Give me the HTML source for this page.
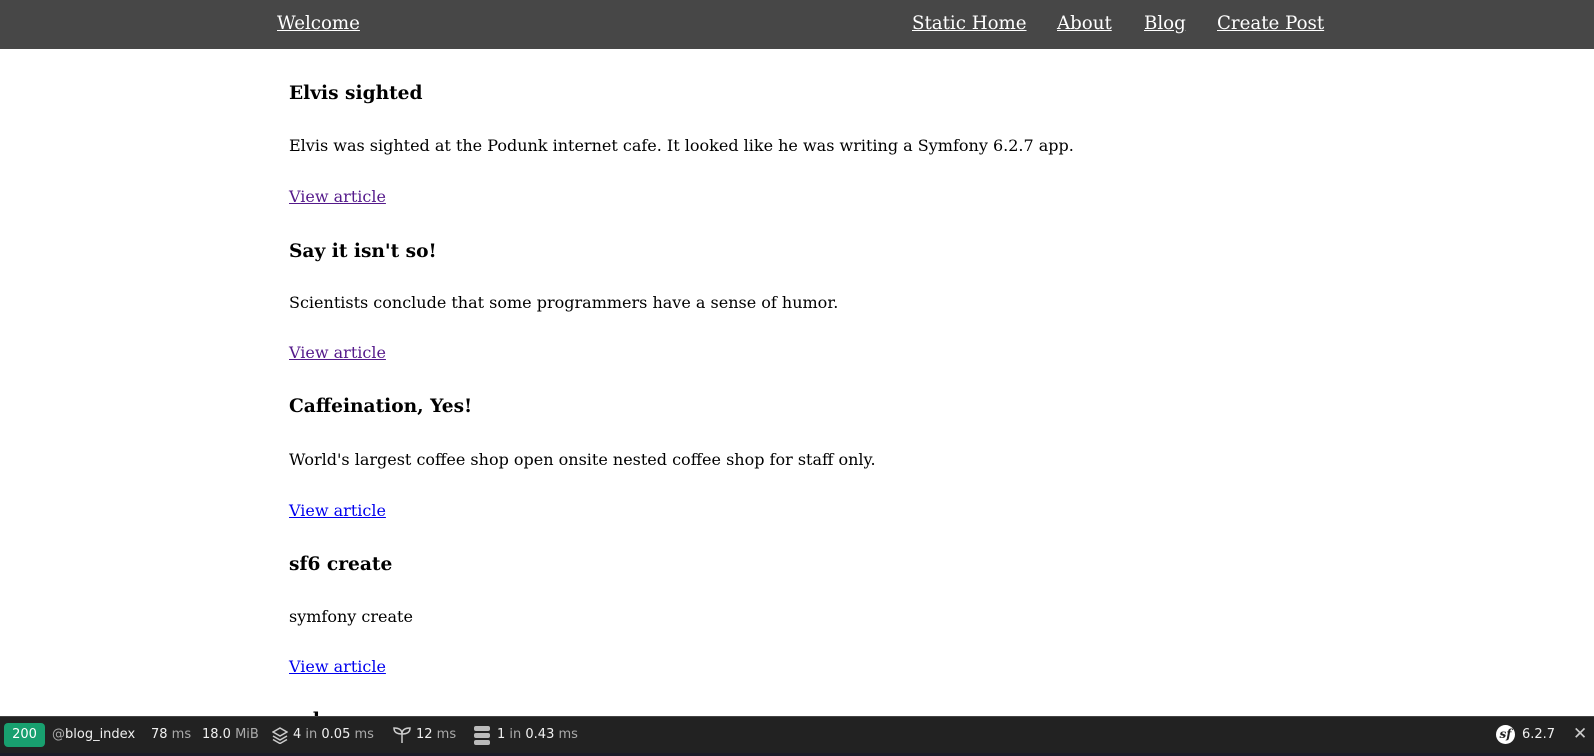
<!DOCTYPE html>
<html><head><meta charset="utf-8"><style>
body{margin:0;width:1594px;height:756px;overflow:hidden;background:#fff;font-family:"DejaVu Serif",serif;position:relative}
.nav{position:absolute;left:0;top:0;width:1594px;height:49px;background:#474747}
.nav a{position:absolute;top:12px;color:#fff;font-size:18.2px;text-decoration:underline;line-height:24px}
.t{position:absolute;left:289px;white-space:nowrap;line-height:22px}
h3.t{margin:0;font-size:18.6px;font-weight:bold}
p.t{margin:0;font-size:16px}
a.t{font-size:16px;color:#0000ee;text-decoration:underline}
a.v{color:#551a8b}
.tb{position:absolute;left:0;top:716px;width:1594px;height:37px;background:#222;border-top:1px solid #444;font-family:"DejaVu Sans",sans-serif;font-size:13px;color:#f0f0f0}
.tb span{position:absolute;top:10px;white-space:nowrap}
.g{color:#aaa}
.strip{position:absolute;left:0;top:753px;width:1594px;height:3px;background:#1c1c28}
</style></head><body>
<div class="nav">
<a href="#" style="left:277px">Welcome</a>
<a href="#" style="left:912px">Static Home</a>
<a href="#" style="left:1057px">About</a>
<a href="#" style="left:1144px">Blog</a>
<a href="#" style="left:1217px">Create Post</a>
</div>
<h3 class="t" style="top:83px">Elvis sighted</h3>
<p class="t" style="top:135px">Elvis was sighted at the Podunk internet cafe. It looked like he was writing a Symfony 6.2.7 app.</p>
<a href="#" class="t v" style="top:186px">View article</a>
<h3 class="t" style="top:241px">Say it isn't so!</h3>
<p class="t" style="top:292px">Scientists conclude that some programmers have a sense of humor.</p>
<a href="#" class="t v" style="top:342px">View article</a>
<h3 class="t" style="top:396px">Caffeination, Yes!</h3>
<p class="t" style="top:449px">World's largest coffee shop open onsite nested coffee shop for staff only.</p>
<a href="#" class="t" style="top:500px">View article</a>
<h3 class="t" style="top:554px">sf6 create</h3>
<p class="t" style="top:606px">symfony create</p>
<a href="#" class="t" style="top:656px">View article</a>
<h3 class="t" style="top:710px">sub</h3>
<div class="tb">
<div style="position:absolute;left:4px;top:6px;width:41px;height:24px;background:#18a06f;border-radius:4px;color:#fff;text-align:center;line-height:24px">200</div>
<span style="left:52px"><span class="g" style="position:static">@</span>blog_index</span>
<span style="left:151px">78<span class="g" style="position:static"> ms</span></span>
<span style="left:202px">18.0<span class="g" style="position:static"> MiB</span></span>
<svg style="position:absolute;left:272px;top:10px" width="16" height="17" viewBox="0 0 16 17" fill="none" stroke="#ccc" stroke-width="1.5"><path d="M8 1L15 5 8 9 1 5Z"/><path d="M1 9l7 4 7-4"/><path d="M1 12.5l7 4 7-4"/></svg>
<span style="left:293px">4<span class="g" style="position:static"> in </span>0.05 <span class="g" style="position:static"> ms</span></span>
<svg style="position:absolute;left:393px;top:10px" width="18" height="17" viewBox="0 0 18 17" fill="none" stroke="#ccc" stroke-width="1.5"><path d="M9 16V7M9 7C9 3 6 1 1 1c0 4 3 6 8 6zM9 7c0-4 3-6 8-6 0 4-3 6-8 6"/></svg>
<span style="left:416px">12<span class="g" style="position:static"> ms</span></span>
<svg style="position:absolute;left:473px;top:9px" width="18" height="19" viewBox="0 0 18 19"><rect x="1" y="0" width="16" height="5" rx="2" fill="#bbb"/><rect x="1" y="7" width="16" height="5" rx="2" fill="#bbb"/><rect x="1" y="14" width="16" height="5" rx="2" fill="#bbb"/></svg>
<span style="left:497px">1<span class="g" style="position:static"> in </span>0.43 <span class="g" style="position:static"> ms</span></span>
<div style="position:absolute;left:1496px;top:8px;width:19px;height:19px;border-radius:50%;background:#fff;color:#222;font:italic bold 12px 'DejaVu Serif',serif;text-align:center;line-height:19px">sf</div>
<span style="left:1522px">6.2.7</span>
<span style="left:1573px;font-size:17px;top:7px;color:#ccc">✕</span>
</div>
<div class="strip"></div>
</body></html>
